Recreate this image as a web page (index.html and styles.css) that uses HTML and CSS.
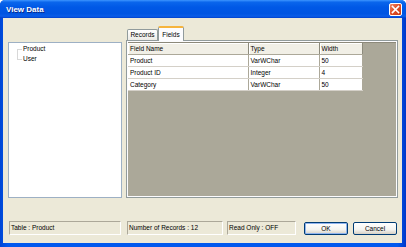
FILE: index.html
```html
<!DOCTYPE html>
<html lang="en">
<head>
    <meta charset="UTF-8">
    <title>View Data</title>
    <link rel="stylesheet" href="styles.css">
</head>
<body class="body">

<div class="window">
    <div class="titlebar">
        <span class="title">View Data</span>
        <button class="close-btn">
            <svg width="9" height="9" viewBox="0 0 9 9">
                <path d="M1.5 1.5 L7.5 7.5 M7.5 1.5 L1.5 7.5" stroke="#fff" stroke-width="1.6" stroke-linecap="square"/>
            </svg>
        </button>
    </div>

    <div class="client">
        <div class="main">
            <!-- Tree -->
            <div class="tree">
                <div class="tree-lines"></div>
                <div class="tree-items">
                    <div class="tree-item">Product</div>
                    <div class="tree-item">User</div>
                </div>
            </div>

            <!-- Tabs -->
            <div class="tabs">
                <div class="tab-strip">
                    <div class="tab">Records</div>
                    <div class="tab active">Fields</div>
                </div>
                <div class="tab-panel">
                    <div class="grid">
                        <table class="grid-table">
                            <thead>
                                <tr>
                                    <th class="col-name">Field Name</th>
                                    <th class="col-type">Type</th>
                                    <th class="col-width">Width</th>
                                </tr>
                            </thead>
                            <tbody>
                                <tr><td>Product</td><td>VarWChar</td><td>50</td></tr>
                                <tr><td>Product ID</td><td>Integer</td><td>4</td></tr>
                                <tr><td>Category</td><td>VarWChar</td><td>50</td></tr>
                            </tbody>
                        </table>
                    </div>
                </div>
            </div>
        </div>

        <div class="footer">
            <div class="status status-table">Table : Product</div>
            <div class="status status-count">Number of Records : 12</div>
            <div class="status status-read">Read Only : OFF</div>
            <button class="btn btn-default">OK</button>
            <button class="btn">Cancel</button>
        </div>
    </div>
</div>

</body>
</html>
```

FILE: styles.css
```css
/* CSS */
* {
    box-sizing: border-box;
}

.body {
    margin: 0;
    width: 406px;
    height: 247px;
    overflow: hidden;
    font-family: "Liberation Sans", Arial, sans-serif;
    font-size: 6.5px;
    color: #000;
}

.window {
    display: flex;
    flex-direction: column;
    width: 406px;
    height: 247px;
    background: linear-gradient(90deg, #0046d5 0%, #0058ee 2%, #0058ee 98%, #0037c8 100%);
    border-radius: 5px 5px 0 0;
}

.titlebar {
    display: flex;
    align-items: center;
    justify-content: space-between;
    height: 18px;
    padding: 0 4px 0 6px;
    border-radius: 5px 5px 0 0;
    background: linear-gradient(#3d95ff 0%, #0a66ec 12%, #0058e6 40%, #0055e2 75%, #0a5de8 90%, #0040cc 100%);
}

.title {
    color: #fff;
    font-family: "Liberation Sans", Arial, sans-serif;
    font-weight: bold;
    font-size: 8px;
    text-shadow: 1px 1px 0 #0a2a8a;
}

.close-btn {
    display: flex;
    align-items: center;
    justify-content: center;
    width: 13px;
    height: 13px;
    padding: 0;
    border: 1px solid #fff;
    border-radius: 2px;
    background: linear-gradient(135deg, #f08a6a 0%, #e0502a 45%, #c83a14 100%);
}

.client {
    display: flex;
    flex-direction: column;
    flex: 1;
    margin: 0 4px 4px 3px;
    padding-top: 8px;
    background: #ece9d8;
}

.main {
    display: flex;
    height: 172px;
    padding-left: 5px;
}

/* Tree */
.tree {
    display: flex;
    align-items: flex-start;
    width: 114px;
    height: 156px;
    margin-top: 16px;
    margin-right: 4px;
    padding: 1px 0 0 8px;
    background: #fff;
    border: 1px solid #9db0c4;
}

.tree-lines {
    width: 5px;
    height: 11px;
    margin-top: 5px;
    margin-right: 1px;
    border: 1px solid #d8d8d8;
    border-right: none;
}

.tree-item {
    height: 10px;
    line-height: 10px;
}

/* Tabs */
.tabs {
    display: flex;
    flex-direction: column;
    width: 272px;
}

.tab-strip {
    display: flex;
    align-items: flex-end;
    height: 14px;
    padding-left: 1px;
}

.tab {
    width: 31px;
    height: 11px;
    line-height: 10px;
    text-align: center;
    border: 1px solid #919b9c;
    border-bottom: none;
    border-radius: 2px 2px 0 0;
    background: linear-gradient(#fff, #ecebe6);
}

.tab.active {
    position: relative;
    width: 26px;
    height: 15px;
    line-height: 13px;
    margin-bottom: -1px;
    border-top: 2px solid #f6b43c;
    background: #fcfcfe;
    z-index: 1;
}

.tab-panel {
    height: 158px;
    padding: 1px;
    border: 1px solid #919b9c;
    background: #fcfcfe;
}

.grid {
    height: 100%;
    background: #aba899;
    border-top: 1px solid #8c897a;
}

.grid-table {
    border-collapse: collapse;
    background: #fff;
}

.grid-table th,
.grid-table td {
    height: 12px;
    padding: 0 2px;
    text-align: left;
    font-weight: normal;
    white-space: nowrap;
    border-right: 1px solid #aca899;
    border-bottom: 1px solid #d4d0c8;
}

.grid-table th {
    height: 11px;
    background: #f1efe6;
    border-right: 1px solid #8c8a7c;
    border-bottom: 1px solid #aca899;
    box-shadow: inset 1px 1px 0 #fff;
}

.col-name {
    width: 120px;
}

.col-type {
    width: 71px;
}

.col-width {
    width: 43px;
}

/* Footer */
.footer {
    display: flex;
    align-items: flex-end;
    margin-top: 23px;
    padding-left: 6px;
}

.status {
    height: 14px;
    padding: 2px 0 0 1px;
    border: 1px solid;
    border-color: #aca899 #fff #fff #aca899;
    white-space: nowrap;
}

.status-table {
    width: 112px;
    margin-right: 6px;
}

.status-count {
    width: 96px;
    margin-right: 4px;
}

.status-read {
    width: 69px;
    margin-right: 8px;
}

.btn {
    width: 44px;
    height: 13px;
    margin-right: 5px;
    padding: 0;
    font-family: "Liberation Sans", Arial, sans-serif;
    font-size: 6.5px;
    color: #000;
    border: 1px solid #003c74;
    border-radius: 2px;
    background: linear-gradient(#fff 0%, #f4f4f0 60%, #d6d0c5 100%);
}

.btn-default {
    box-shadow: inset 0 0 0 1px #8fb4ef;
}
```
